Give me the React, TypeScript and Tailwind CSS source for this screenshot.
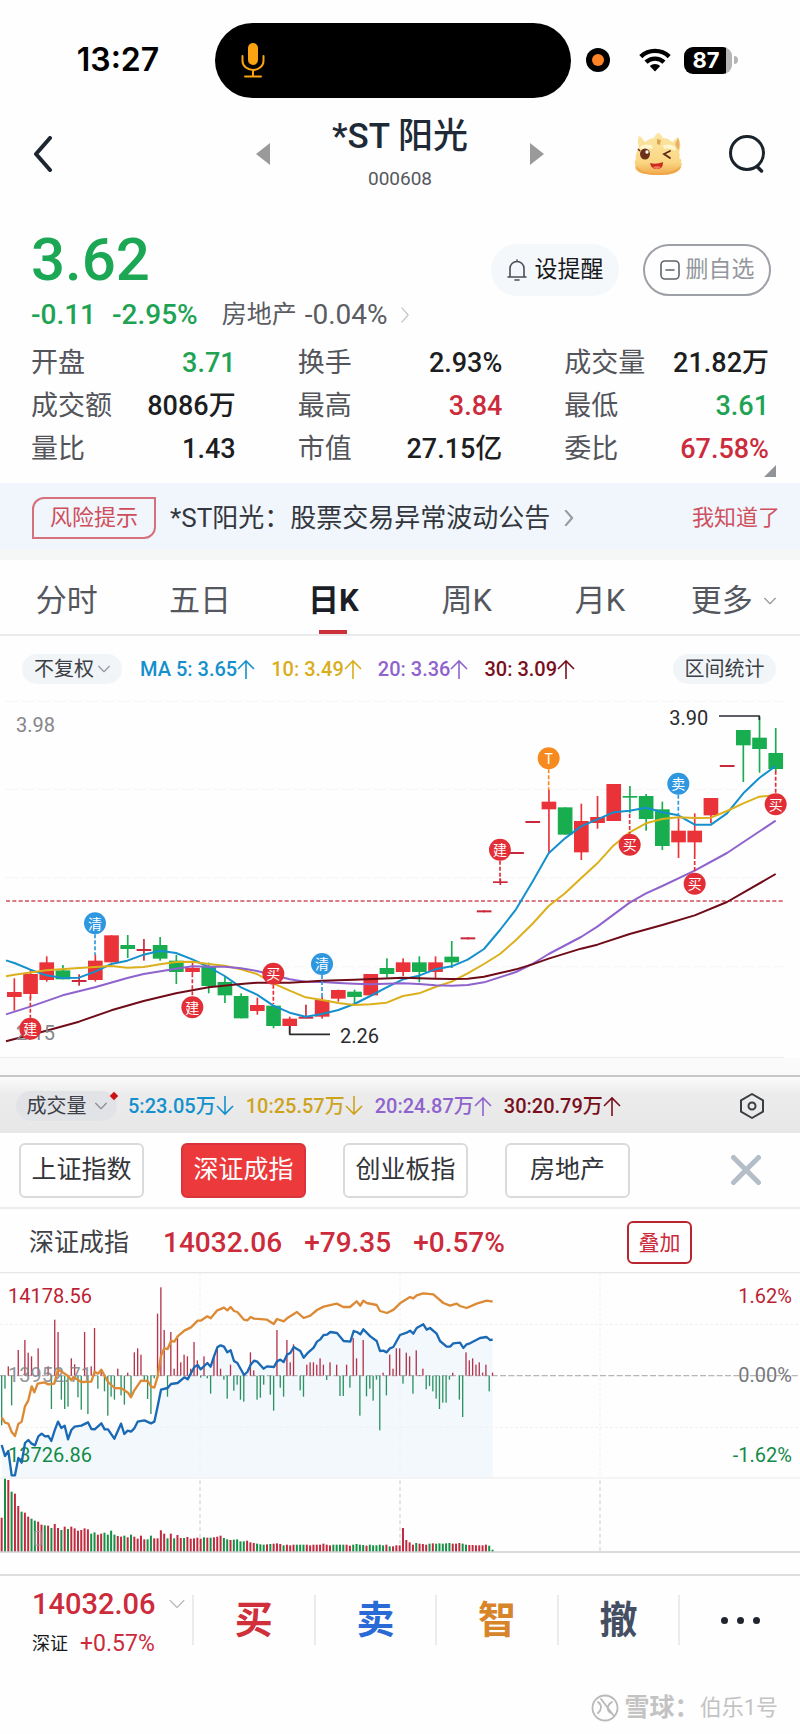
import React from "react";

const RED = "#ea3239";
const GREEN = "#18ad4f";

/* Candle geometry on a 2400-unit wide canvas: kind, high, low, body top, body bottom. */
type Candle = ["r" | "g" | "d", number, number, number, number];
const candles: Candle[] = [
  ["r", 835, 932, 876, 891], ["r", 810, 895, 822, 882], ["r", 769, 845, 787, 840], ["g", 795, 838, 811, 838],
  ["d", 823, 857, 840, 846], ["r", 765, 845, 782, 840], ["r", 706, 787, 706, 787], ["g", 705, 774, 735, 747],
  ["d", 717, 782, 747, 753], ["g", 711, 782, 735, 776], ["g", 765, 852, 782, 816], ["r", 787, 820, 804, 816],
  ["g", 788, 880, 801, 858], ["g", 828, 909, 846, 886], ["g", 880, 955, 888, 955], ["r", 893, 944, 915, 933],
  ["g", 915, 985, 917, 978], ["r", 950, 1000, 956, 978], ["d", 914, 955, 950, 956], ["r", 890, 956, 900, 950],
  ["r", 869, 905, 870, 896], ["g", 869, 910, 875, 891], ["r", 822, 886, 822, 886], ["g", 775, 833, 804, 822],
  ["r", 775, 828, 787, 816], ["g", 769, 847, 787, 816], ["r", 769, 835, 787, 816], ["g", 723, 804, 770, 787],
  ["d", 712, 718, 712, 718], ["d", 631, 637, 631, 637], ["d", 535, 555, 544, 549], ["d", 456, 462, 456, 462],
  ["d", 363, 369, 363, 369], ["r", 270, 460, 305, 328], ["g", 322, 404, 322, 404], ["r", 311, 480, 363, 457],
  ["r", 288, 386, 351, 369], ["r", 252, 363, 252, 363], ["g", 258, 340, 288, 293], ["g", 282, 392, 288, 357],
  ["g", 305, 450, 328, 438], ["r", 350, 474, 392, 427], ["r", 340, 465, 392, 427], ["r", 294, 370, 294, 346],
  ["d", 195, 201, 195, 201], ["g", 90, 246, 90, 136], ["g", 50, 218, 113, 147], ["g", 84, 215, 159, 207],
];
const candleX = (i: number) => 43 + 48.6 * i;
const candleColor = { r: RED, g: GREEN, d: "#c8283a" };

const ma5 = "18,781 43,789 91,809 139,826 188,834 237,833 285,815 334,792 382,782 431,764 480,752 528,759 577,778 626,801 674,828 723,862 771,884 820,917 869,938 917,950 966,942 1015,930 1063,912 1111,888 1160,862 1209,838 1257,827 1306,808 1355,799 1403,779 1452,747 1500,690 1548,628 1597,546 1646,460 1695,415 1743,379 1792,358 1840,337 1889,332 1938,323 1987,337 2035,346 2084,374 2133,374 2181,340 2230,280 2278,234 2327,198";
const ma10 = "18,829 43,824 139,811 237,804 334,798 382,803 431,801 480,793 528,786 577,785 626,792 674,797 723,808 771,822 820,850 869,872 917,892 966,900 1015,909 1063,915 1111,913 1160,908 1209,888 1257,880 1306,861 1355,845 1403,820 1452,792 1500,762 1548,720 1597,672 1646,618 1695,580 1743,535 1792,490 1840,437 1889,397 1938,370 1987,357 2035,352 2084,354 2133,353 2181,333 2230,310 2278,290 2327,286";
const ma20 = "18,943 91,920 188,886 285,862 382,834 431,822 528,806 577,799 626,800 674,800 723,805 771,813 820,825 869,838 917,845 966,846 1015,849 1063,851 1111,853 1160,851 1209,850 1257,852 1306,856 1355,857 1403,855 1452,847 1548,816 1597,792 1646,762 1743,711 1792,680 1889,608 1938,580 1987,558 2084,512 2181,459 2327,362";
const ma30 = "18,1024 139,992 237,965 334,931 431,903 528,880 626,862 723,852 771,848 869,848 966,842 1063,839 1209,833 1257,835 1306,836 1355,837 1403,836 1452,830 1500,819 1548,808 1597,793 1646,776 1743,746 1792,734 1889,702 1987,675 2084,646 2181,606 2230,578 2327,522";

const markers = [
  { x: 285, y: 670, t: "清", c: "#2f97df", a: 703, b: 765 },
  { x: 91, y: 986, t: "建", c: "#e22f37", a: 890, b: 953 },
  { x: 577, y: 922, t: "建", c: "#e22f37", a: 820, b: 890 },
  { x: 820, y: 821, t: "买", c: "#e22f37", a: 854, b: 912 },
  { x: 966, y: 792, t: "清", c: "#2f97df", a: 825, b: 892 },
  { x: 1646, y: 175, t: "T", c: "#f78a1f", a: 208, b: 270 },
  { x: 1500, y: 449, t: "建", c: "#e22f37", a: 482, b: 542 },
  { x: 1889, y: 434, t: "买", c: "#e22f37", a: 342, b: 401 },
  { x: 2035, y: 251, t: "卖", c: "#2f97df", a: 284, b: 348 },
  { x: 2084, y: 551, t: "买", c: "#e22f37", a: 465, b: 518 },
  { x: 2327, y: 313, t: "买", c: "#e22f37", a: 212, b: 280 },
];

function KLineChart() {
  return (
    <svg viewBox="0 0 2400 1074" className="block w-full" role="img" aria-label="日K线图">
      {[4, 268, 533, 800].map((y) => (
        <line key={y} x1="16" x2="2352" y1={y} y2={y} stroke="#f6f6f8" strokeWidth="4" strokeDasharray="36 12" />
      ))}
      <line x1="18" x2="2352" y1="603" y2="603" stroke="#cf4f5c" strokeWidth="4" strokeDasharray="12 7" />
      {candles.map(([k, h, l, t, b], i) => (
        <g key={i} fill={candleColor[k]}>
          <rect x={candleX(i) - 2.5} y={h} width="5" height={l - h} />
          <rect x={candleX(i) - 22} y={t} width="44" height={b - t} />
        </g>
      ))}
      <g fill="none" strokeWidth="6" strokeLinejoin="round">
        <polyline points={ma5} stroke="#1490cd" />
        <polyline points={ma10} stroke="#dcb01c" />
        <polyline points={ma20} stroke="#8f63cd" />
        <polyline points={ma30} stroke="#700c18" />
        <polyline points="869,978 869,1003 990,1003" stroke="#2b2b30" strokeWidth="5" />
        <polyline points="2157,48 2278,48 2278,60" stroke="#2b2b30" strokeWidth="5" />
      </g>
      <text x="48" y="1020" fontSize="60" fill="#85868a">2.15</text>
      {markers.map((m, i) => (
        <g key={i}>
          <line x1={m.x} x2={m.x} y1={m.a} y2={m.b} stroke={m.c} strokeWidth="5" strokeDasharray="12 6" />
          <circle cx={m.x} cy={m.y} r="33" fill={m.c} />
          <text x={m.x} y={m.y + 16} textAnchor="middle" fontSize="42" fill="#fff">{m.t}</text>
        </g>
      ))}
      <text x="48" y="96" fontSize="60" fill="#85868a">3.98</text>
      <text x="1020" y="1028" fontSize="60" fill="#2b2b30">2.26</text>
      <text x="2008" y="75" fontSize="60" fill="#2b2b30">3.90</text>
      <line x1="0" x2="2352" y1="1072" y2="1072" stroke="#ececee" strokeWidth="3" />
    </svg>
  );
}

/* Tip position of each minute's bar around the zero line at 348; 0 leaves a gap. */
const momentum = [
  497, 387, 320, 437, 0, 271, 0, 241, 279, 290, 0, 266, 0, 0, 320, 448, 180, 217, 420, 448, 441, 296, 314, 413, 450,
  217, 463, 320, 205, 387, 330, 395, 468, 411, 420, 327, 407, 435, 339, 413, 278, 266, 285, 362, 418, 463, 356, 162,
  83, 211, 411, 217, 327, 235, 308, 285, 290, 327, 247, 302, 354, 290, 356, 402, 290, 266, 327, 360, 417, 315, 393,
  375, 420, 426, 0, 278, 332, 420, 414, 375, 0, 405, 453, 211, 384, 411, 241, 308, 254, 0, 392, 411, 315, 308, 308,
  315, 296, 315, 361, 308, 0, 315, 409, 409, 315, 384, 235, 296, 468, 241, 410, 387, 423, 360, 512, 339, 407, 285,
  327, 266, 266, 372, 279, 290, 402, 272, 346, 327, 389, 379, 395, 417, 448, 429, 429, 360, 339, 0, 420, 472, 278,
  302, 296, 315, 308, 339, 315, 395, 339,
];
const volumeTop = [
  774, 657, 661, 696, 702, 739, 756, 759, 771, 777, 783, 786, 795, 797, 798, 805, 793, 805, 811, 801, 808, 801, 806,
  813, 811, 806, 809, 822, 818, 825, 822, 819, 825, 813, 825, 829, 831, 828, 833, 825, 831, 837, 828, 839, 839, 828,
  836, 836, 812, 822, 836, 822, 836, 826, 835, 835, 832, 837, 836, 834, 837, 833, 834, 834, 833, 831, 828, 835, 839,
  841, 840, 839, 845, 845, 843, 848, 850, 852, 854, 855, 854, 853, 852, 851, 853, 857, 855, 857, 855, 855, 855, 855,
  855, 857, 855, 855, 855, 852, 855, 857, 855, 855, 855, 855, 855, 858, 855, 853, 855, 856, 858, 855, 857, 857, 855,
  857, 855, 860, 860, 857, 857, 805, 841, 848, 855, 850, 852, 853, 855, 852, 851, 852, 851, 852, 851, 850, 852, 852,
  850, 852, 855, 856, 856, 857, 857, 857, 855, 858, 870,
];
const volumeSide =
  "rgrgrrgrrggrrgrgrrgrgrrrrrrggrrggggrrgrgrrrrggrrrrgrgrrgrrrrrgrgrrrggrgggg" +
  "rrrgggrgrrrgrrrgggrrrrrrrrggggrrggggrgggggrgrrrrrrrgrrrgrgggggrrrggrrrrrrgggr";

const barX = (i: number) => 5 + 9.95 * i;
const indexLine = "5,556 15,589 25,574 35,647 45,647 55,595 65,609 75,550 85,541 95,552 105,557 115,530 125,522 135,530 145,529 154,544 164,512 174,486 184,505 194,498 204,539 214,511 224,501 244,498 264,488 274,508 284,509 304,491 314,509 324,509 343,537 363,492 373,523 383,513 393,516 403,506 413,486 433,482 453,491 463,486 473,440 483,390 503,385 513,373 533,370 553,353 563,359 583,322 593,316 602,329 622,310 632,321 642,290 652,263 662,257 672,261 682,278 692,272 702,304 712,310 732,346 742,337 752,315 762,303 772,306 791,327 801,320 822,322 831,305 841,300 851,307 861,285 871,280 881,262 891,268 901,274 911,294 921,282 941,264 951,246 961,239 971,226 981,225 991,217 1011,220 1031,244 1051,246 1061,214 1071,217 1081,224 1090,209 1111,230 1130,244 1140,274 1150,273 1160,278 1170,266 1180,262 1200,226 1220,219 1230,213 1240,222 1250,205 1270,194 1280,210 1290,205 1310,222 1320,244 1340,261 1350,261 1360,251 1380,249 1390,265 1400,254 1410,251 1440,235 1460,232 1470,241 1478,240";
const leadLine = "5,473 15,489 25,492 35,517 45,529 55,493 65,486 75,440 85,422 95,380 103,398 113,372 133,368 145,374 163,372 174,330 184,335 204,349 214,362 220,352 244,367 274,366 284,336 294,342 304,330 324,367 344,385 364,386 384,399 393,413 403,392 423,363 443,364 453,380 463,384 473,350 483,288 493,266 503,268 513,244 523,246 533,230 553,213 573,203 593,183 602,183 622,170 632,176 652,152 672,144 682,152 692,142 702,154 712,157 732,180 742,182 752,172 762,177 801,180 821,193 831,178 851,185 861,176 891,157 911,175 931,168 951,151 971,141 1010,132 1030,142 1050,142 1070,125 1081,138 1090,123 1100,130 1130,136 1140,154 1161,160 1181,150 1200,131 1230,112 1240,116 1250,107 1270,101 1300,104 1330,130 1350,138 1370,132 1380,139 1400,145 1430,132 1460,123 1478,126";

function IndexChart() {
  return (
    <svg viewBox="0 37 2400 843" className="block w-full" role="img" aria-label="深证成指分时图">
      <line x1="0" x2="2400" y1="39" y2="39" stroke="#e6e6e8" strokeWidth="4" />
      <polygon points={`5,655 ${indexLine} 1478,655`} fill="#f3f8fd" />
      <g stroke="#f0f0f3" strokeWidth="3" strokeDasharray="9 6">
        <line x1="0" x2="2400" y1="194" y2="194" />
        <line x1="0" x2="2400" y1="503" y2="503" />
        {[600, 1200, 1800].map((x) => <line key={x} x1={x} x2={x} y1="40" y2="655" />)}
      </g>
      <g stroke="#d9d9dd" strokeWidth="4" strokeDasharray="12 8">
        {[600, 1200, 1800].map((x) => <line key={x} x1={x} x2={x} y1="662" y2="875" />)}
      </g>
      <line x1="0" x2="2400" y1="655" y2="655" stroke="#ececef" strokeWidth="3" />
      <line x1="0" x2="2400" y1="348" y2="348" stroke="#b5b5b9" strokeWidth="4" strokeDasharray="18 7" />
      {momentum.map((y, i) =>
        y === 0 ? null : (
          <rect key={i} x={barX(i) - 2} width="4" y={Math.min(y, 348)} height={Math.abs(348 - y)} fill={y < 348 ? "#b5344c" : "#2d9263"} />
        ),
      )}
      <text x="24" y="367" fontSize="60" fill="#85868a" fillOpacity="0.9">13952.71</text>
      <text x="24" y="130" fontSize="60" fill="#bb1f33">14178.56</text>
      <text x="24" y="606" fontSize="60" fill="#128a48">13726.86</text>
      <g textAnchor="end" fontSize="60">
        <text x="2376" y="130" fill="#bb1f33">1.62%</text>
        <text x="2376" y="367" fill="#77787c">0.00%</text>
        <text x="2376" y="606" fill="#128a48">-1.62%</text>
      </g>
      <g fill="none" strokeLinejoin="round" strokeWidth="7">
        <polyline points={leadLine} stroke="#dc8a35" />
        <polyline points={indexLine} stroke="#1a69b4" />
      </g>
      {volumeTop.map((y, i) => (
        <rect key={i} x={barX(i) - 3} width="6" y={y} height={877 - y} fill={volumeSide[i] === "r" ? "#c02a3e" : "#159044"} />
      ))}
      <rect x="105" y="816" width="18" height="40" fill="none" stroke="#9a9a9a" strokeWidth="3" />
      <line x1="0" x2="2400" y1="877" y2="877" stroke="#cfcfd3" strokeWidth="4" />
    </svg>
  );
}

function Chevron({ dir, className }: { dir: "left" | "right" | "down"; className: string }) {
  const d = { left: "M18 2 4 18l14 16", right: "M4 2l14 16L4 34", down: "M2 6l16 16L34 6" }[dir];
  return (
    <svg viewBox={dir === "down" ? "0 0 36 28" : "0 0 22 36"} className={className} fill="none" stroke="currentColor" strokeLinecap="round" strokeLinejoin="round" aria-hidden="true">
      <path d={d} />
    </svg>
  );
}

function StatusBar() {
  return (
    <div className="flex h-[120px] items-center px-[5px]">
      <div className="w-[210px] pl-5 pr-1 text-center font-[Inter,sans-serif] text-[32px] font-semibold leading-10 text-black">13:27</div>
      <div className="flex h-[75px] w-[356px] items-center rounded-full bg-black pl-[26px]">
        <svg viewBox="0 0 24 36" className="h-9 w-6" fill="none" aria-hidden="true">
          <rect x="7" y="1" width="10" height="22" rx="5" fill="#fca311" />
          <path d="M1.500 14v5a10.500 9 0 0 0 21 0v-5M12 28v6M4 34.500h16" stroke="#fca311" strokeWidth="2" strokeLinecap="round" />
        </svg>
      </div>
      <div className="ml-[15px] flex size-6 items-center justify-center rounded-full bg-black">
        <div className="size-3 rounded-full bg-[#ff8426]" />
      </div>
      <svg viewBox="0 0 32 24" className="ml-[29px] h-6 w-8" aria-hidden="true">
        <g fill="none" stroke="#000" strokeWidth="4.400">
          <path d="M1.800 8.600a20.500 20.500 0 0 1 28.400 0" />
          <path d="M7 14.200a13 13 0 0 1 18 0" />
        </g>
        <path d="M16 23.500l-5.200-5.400a7.600 7.600 0 0 1 10.400 0z" />
      </svg>
      <div className="ml-[13px] flex items-center gap-[2px]">
        <div className="flex h-[27px] w-12 items-center justify-center rounded-[9px] bg-linear-to-r from-black from-87% to-[#b5b5b5] to-87% pr-1 font-[Inter,sans-serif] text-[22px] font-bold leading-6 text-white">87</div>
        <div className="h-2 w-1 rounded-r-full bg-[#b5b5b5]" />
      </div>
    </div>
  );
}

function Mascot() {
  return (
    <svg viewBox="0 0 48 44" className="h-11 w-12" aria-hidden="true">
      <defs>
        <linearGradient id="face" x1="0" y1="0" x2="0" y2="1">
          <stop offset="0" stopColor="#fbe7a5" />
          <stop offset="0.7" stopColor="#fad684" />
          <stop offset="1" stopColor="#f0a848" />
        </linearGradient>
      </defs>
      <path d="M5 4c2 0 4 4 6 6 3-2 6-4 9-4 1-3 3-5 5-5 2 1 3 3 4 5 4 0 7 2 9 4 2-1 4-4 6-5 3 5 3 11 1 15 1 3 1 5 0 6 2 1 3 2 2 4 1 2 1 3 0 4 0 4-5 9-22 9C11 43 3 41 1 36c1-2 0-3 0-4C0 30 1 28 2 27c-1-3 0-5 1-7 0-2 1-3 2-4C4 12 3 8 5 4z" fill="url(#face)" />
      <path d="M2 34c4 5 10 7 17 7 12 1 21-1 28-7-1 6-9 9-22 9C11 43 3 40 2 34z" fill="#efa647" />
      <path d="M44 6c2 4 2 9 0 12l-3-6z" fill="#e8b266" />
      <path d="M6 15c3-3 7-3 12-2l1 4c-5-1-9 0-12 2zM29 13c5-1 9-1 12 2l1 4c-4-2-8-3-12-2z" fill="#fff6cf" />
      <path d="M23 7l4 1-1 5-3-1z" fill="#dca652" />
      <ellipse cx="11" cy="22" rx="5" ry="5.500" fill="#6e3018" />
      <circle cx="13" cy="20" r="1.700" fill="#fff" />
      <path d="M6 19l-2-2" stroke="#5b2816" strokeWidth="1.500" />
      <path d="M36 19l-6 3 6 4" fill="none" stroke="#5b2816" strokeWidth="1.800" strokeLinecap="round" />
      <path d="M16 31c4 1 8 1 13-1 0 5-2 7-6 7s-6-2-7-6z" fill="#c92d21" />
      <path d="M19 35c2-1 6-1 8 0-2 2-6 3-8 0z" fill="#f27a5a" />
    </svg>
  );
}

function Header() {
  return (
    <header className="flex h-[68px] items-center pl-8 pr-[34px]">
      <button aria-label="返回" className="w-[224px] text-[#1d2530]">
        <Chevron dir="left" className="h-9 w-[22px] stroke-[4]" />
      </button>
      <button aria-label="上一只" className="text-[#9a9a9a]">
        <svg viewBox="0 0 14 22" className="h-[22px] w-[14px]" fill="currentColor" aria-hidden="true"><path d="M14 0v22L0 11z" /></svg>
      </button>
      <div className="flex flex-1 flex-col items-center gap-[10px]">
        <h1 className="text-[35px] font-medium leading-10 text-[#202a36]">*ST 阳光</h1>
        <p className="text-[19px] leading-6 text-[#56585e]">000608</p>
      </div>
      <button aria-label="下一只" className="text-[#9a9a9a]">
        <svg viewBox="0 0 14 22" className="h-[22px] w-[14px]" fill="currentColor" aria-hidden="true"><path d="M0 0v22l14-11z" /></svg>
      </button>
      <div className="flex w-[222px] items-center justify-end gap-[46px]">
        <button aria-label="智能助手"><Mascot /></button>
        <button aria-label="搜索" className="text-[#1a232b]">
          <svg viewBox="0 0 38 40" className="h-10 w-[38px]" fill="none" stroke="currentColor" strokeWidth="3" strokeLinecap="round" aria-hidden="true">
            <circle cx="19" cy="19" r="16.500" />
            <path d="M29 32.500l4.500 4.500" strokeWidth="3.500" />
          </svg>
        </button>
      </div>
    </header>
  );
}

const stats = [
  ["开盘", "3.71", "text-[#1ea354]"], ["换手", "2.93%", "text-[#1c1e22]"], ["成交量", "21.82万", "text-[#1c1e22]"],
  ["成交额", "8086万", "text-[#1c1e22]"], ["最高", "3.84", "text-[#cc2b3b]"], ["最低", "3.61", "text-[#1ea354]"],
  ["量比", "1.43", "text-[#1c1e22]"], ["市值", "27.15亿", "text-[#1c1e22]"], ["委比", "67.58%", "text-[#cc2b3b]"],
];

function Quote() {
  return (
    <section className="px-[31px] pt-9">
      <div className="flex items-center justify-between">
        <p className="text-[60px] font-medium leading-[60px] text-[#1ba753]">3.62</p>
        <div className="-mr-[2px] flex gap-6 pt-5">
          <button className="flex h-[52px] w-[128px] items-center justify-center gap-2 rounded-full bg-[#f5f8fb] text-[23px] leading-8 text-[#17191d]">
            <svg viewBox="0 0 20 22" className="h-[22px] w-5" fill="none" stroke="#4b4f56" strokeWidth="1.600" strokeLinecap="round" aria-hidden="true">
              <path d="M1 18h18M3 18V9.500a7 7 0 0 1 14 0V18M8 21h4M10 1v1.500" />
            </svg>
            设提醒
          </button>
          <button className="flex h-[52px] w-[128px] items-center justify-center gap-[6px] rounded-full border-2 border-[#9da0a6] text-[23px] leading-8 text-[#94979d]">
            <svg viewBox="0 0 20 20" className="size-5" fill="none" stroke="#5f6369" strokeWidth="1.600" strokeLinecap="round" aria-hidden="true">
              <rect x="1" y="1" width="18" height="18" rx="4" />
              <path d="M6 10h8" />
            </svg>
            删自选
          </button>
        </div>
      </div>
      <div className="mt-px flex h-9 items-center text-[28px] leading-9">
        <span className="font-medium text-[#1ea354]">-0.11</span>
        <span className="ml-4 font-medium text-[#1ea354]">-2.95%</span>
        <a href="#sector" className="ml-6 flex items-center gap-2 text-[#5a5c62]">
          <span className="text-[25px]">房地产</span>
          <span>-0.04%</span>
          <Chevron dir="right" className="ml-1 h-4 w-[10px] stroke-[3] text-[#c5c7cc]" />
        </a>
      </div>
      <dl className="mt-2 grid grid-cols-3 gap-x-[62px] pb-[13px]">
        {stats.map(([k, v, c]) => (
          <div key={k} className="flex h-[43px] items-center justify-between whitespace-nowrap leading-9">
            <dt className="text-[27px] text-[#53555b]">{k}</dt>
            <dd className={`text-[27px] font-medium ${c}`}>{v}</dd>
          </div>
        ))}
      </dl>
    </section>
  );
}

function Notice() {
  return (
    <section className="relative flex h-[77px] items-center border-b-[11px] border-[#f5f6f6] bg-[#f0f6fc] pl-8 pr-5 pt-1">
      <svg viewBox="0 0 12 12" className="absolute -top-[18px] right-6 size-3" fill="#909398" aria-hidden="true"><path d="M12 0v12H0z" /></svg>
      <span className="flex h-[42px] w-[124px] items-center justify-center rounded-br-xl rounded-tl-xl border-2 border-[#d5707c] text-[22px] leading-8 text-[#cf4c5b]">风险提示</span>
      <a href="#notice" className="ml-[14px] flex items-center text-[26px] leading-9 text-[#33363c]">
        *ST阳光：股票交易异常波动公告
        <Chevron dir="right" className="ml-[14px] h-4 w-[10px] stroke-[5] text-[#989ba1]" />
      </a>
      <button className="ml-auto text-[22px] leading-8 text-[#cf5160]">我知道了</button>
    </section>
  );
}

const periods = ["分时", "五日", "日K", "周K", "月K", "更多"];

function Periods() {
  return (
    <nav className="grid h-[76px] grid-cols-6 border-b-2 border-[#e9eaec]">
      {periods.map((p) => (
        <button
          key={p}
          className={`relative flex items-center justify-center gap-[11px] pt-2 text-[31px] leading-10 ${p === "日K" ? "font-bold text-[#1b1e26]" : "text-[#55575e]"}`}
        >
          {p}
          {p === "更多" && <Chevron dir="down" className="h-[10px] w-3 stroke-[4] text-[#9a9ca2]" />}
          {p === "日K" && <span className="absolute bottom-0 h-1 w-7 bg-[#cc3038]" />}
        </button>
      ))}
    </nav>
  );
}

function Arrow({ up }: { up: boolean }) {
  return (
    <svg viewBox="0 0 18 20" className="h-5 w-[18px]" fill="none" stroke="currentColor" strokeWidth="1.600" aria-hidden="true">
      <path d={up ? "M9 20V2M1 10l8-8 8 8" : "M9 0v18M1 10l8 8 8-8"} />
    </svg>
  );
}

function Averages({ items, gap }: { items: [string, boolean, string][]; gap: string }) {
  return (
    <ul className={`flex text-[20px] font-medium leading-7 ${gap}`}>
      {items.map(([t, up, c]) => (
        <li key={t} className={`flex items-center whitespace-nowrap ${c}`}>
          {t}
          <Arrow up={up} />
        </li>
      ))}
    </ul>
  );
}

const indexes = ["上证指数", "深证成指", "创业板指", "房地产"];
const trades = [
  ["买", "text-[#d0303a]"],
  ["卖", "text-[#2a6ad6]"],
  ["智", "text-[#d6852b]"],
  ["撤", "text-[#454f63]"],
];

export default function App() {
  return (
    <main className="min-h-screen bg-[#fefefe] font-[Roboto,'Noto_Sans_CJK_SC',sans-serif]">
      <StatusBar />
      <Header />
      <Quote />
      <Notice />
      <Periods />

      <section>
        <div className="flex h-[64px] items-center pl-[22px] pr-6 pt-[2px]">
          <button className="flex h-[30px] w-[100px] items-center justify-center gap-1 rounded-full bg-[#f2f5f8] text-[20px] leading-7 text-[#3c3f46]">
            不复权
            <Chevron dir="down" className="h-[10px] w-3 stroke-[4] text-[#9a9ca2]" />
          </button>
          <div className="ml-[18px]">
            <Averages
              gap="gap-4"
              items={[
                ["MA 5: 3.65", true, "text-[#1490cd]"],
                ["10: 3.49", true, "text-[#d9ad1b]"],
                ["20: 3.36", true, "text-[#8f63cd]"],
                ["30: 3.09", true, "text-[#7a0f1c]"],
              ]}
            />
          </div>
          <button className="ml-auto h-[30px] w-[103px] rounded-full bg-[#f2f5f8] text-[20px] leading-7 text-[#3c3f46]">区间统计</button>
        </div>
        <KLineChart />
        <div className="h-[19px] border-b-2 border-[#c6c6c8] bg-[#fafafa]" />
        <div className="flex h-14 items-center bg-linear-to-b from-[#fbfbfb] from-0% via-[#ececec] via-30% to-[#e7e7e7] pl-4 pr-9 pt-[2px]">
          <button className="relative flex h-[30px] w-[101px] items-center justify-center gap-2 rounded-full bg-[#e1e3e6] text-[20px] leading-7 text-[#3c3f46]">
            成交量
            <Chevron dir="down" className="h-[10px] w-3 stroke-[4] text-[#8d9096]" />
            <span className="absolute right-0 top-[2px] size-[6px] rotate-45 bg-[#cc1111]" />
          </button>
          <div className="ml-[11px]">
            <Averages
              gap="gap-3"
              items={[
                ["5:23.05万", false, "text-[#1490cd]"],
                ["10:25.57万", false, "text-[#cda31e]"],
                ["20:24.87万", true, "text-[#8f63cd]"],
                ["30:20.79万", true, "text-[#7a0f1c]"],
              ]}
            />
          </div>
          <button aria-label="指标设置" className="ml-auto text-[#3a3d42]">
            <svg viewBox="0 0 24 26" className="h-[26px] w-6" fill="none" stroke="currentColor" strokeWidth="2" strokeLinejoin="round" aria-hidden="true">
              <path d="M12 1l11 6.300v11.400L12 25 1 18.700V7.300z" />
              <circle cx="12" cy="13" r="3.500" />
            </svg>
          </button>
        </div>
      </section>

      <section>
        <div className="flex h-[76px] items-center gap-[37px] border-b-2 border-[#ededef] pl-[19px] pr-[38px]">
          {indexes.map((n) => (
            <button
              key={n}
              className={`h-[55px] w-[125px] rounded-md border-2 text-[25px] leading-9 ${n === "深证成指" ? "border-[#d9343a] bg-[#ec393b] text-white" : "border-[#d9dadc] bg-white text-[#33353a]"}`}
            >
              {n}
            </button>
          ))}
          <button aria-label="关闭" className="ml-auto text-[#b4bec9]">
            <svg viewBox="0 0 32 32" className="size-8" fill="none" stroke="currentColor" strokeWidth="5" strokeLinecap="round" aria-hidden="true">
              <path d="M3.500 3.500l25 25M28.500 3.500l-25 25" />
            </svg>
          </button>
        </div>
        <div className="flex h-[63px] items-center pl-[29px] pt-1 text-[28px] font-medium leading-9 text-[#cc2b3b]">
          <span className="w-[134px] text-[25px] font-normal text-[#3f4147]">深证成指</span>
          <span className="mr-[22px]">14032.06</span>
          <span className="mr-[22px]">+79.35</span>
          <span>+0.57%</span>
          <button className="ml-auto mr-[108px] h-[43px] w-[65px] rounded-md border-2 border-[#b8242f] text-[21px] font-normal leading-8">叠加</button>
        </div>
        <IndexChart />
      </section>

      <footer className="mt-[21px] border-t-2 border-[#dcdddf]">
        <div className="flex pt-[7px]">
          <div className="flex w-[192px] flex-col gap-1 pl-8 pt-[3px]">
            <p className="flex items-center gap-[14px] text-[29px] font-medium leading-9 text-[#cc2b3b]">
              14032.06
              <Chevron dir="down" className="h-3 w-4 stroke-[3] text-[#b9bbc0]" />
            </p>
            <p className="flex items-center gap-3 whitespace-nowrap text-[23px] leading-9 text-[#cc2b3b]">
              <span className="text-[18px] text-[#17191d]">深证</span>+0.57%
            </p>
          </div>
          <nav className="grid flex-1 grid-cols-5 pt-3">
            {trades.map(([t, c]) => (
              <button key={t} className={`h-[50px] border-l-2 border-[#ebebed] text-[38px] font-bold leading-[46px] ${c}`}>{t}</button>
            ))}
            <button aria-label="更多" className="flex h-[50px] items-center justify-center gap-[9px] border-l-2 border-[#ebebed]">
              {[0, 1, 2].map((n) => <span key={n} className="size-[7px] rounded-full bg-[#1f2630]" />)}
            </button>
          </nav>
        </div>
        <div className="flex items-center justify-end pb-3 pr-[22px] pt-[30px] text-[#c3c3c3]">
          <svg viewBox="0 0 28 28" className="mr-[6px] size-7" fill="none" stroke="#b9b9b9" strokeWidth="1.800" strokeLinecap="round" aria-hidden="true">
            <circle cx="14" cy="14" r="12.500" />
            <path d="M7 8c4 3 4 7 0 11M21 8c-5 3-6 8-1 11M10 5l13 17" />
          </svg>
          <span className="text-[25px] font-bold leading-8">雪球：</span>
          <span className="text-[22px] leading-8">伯乐1号</span>
        </div>
      </footer>
    </main>
  );
}
